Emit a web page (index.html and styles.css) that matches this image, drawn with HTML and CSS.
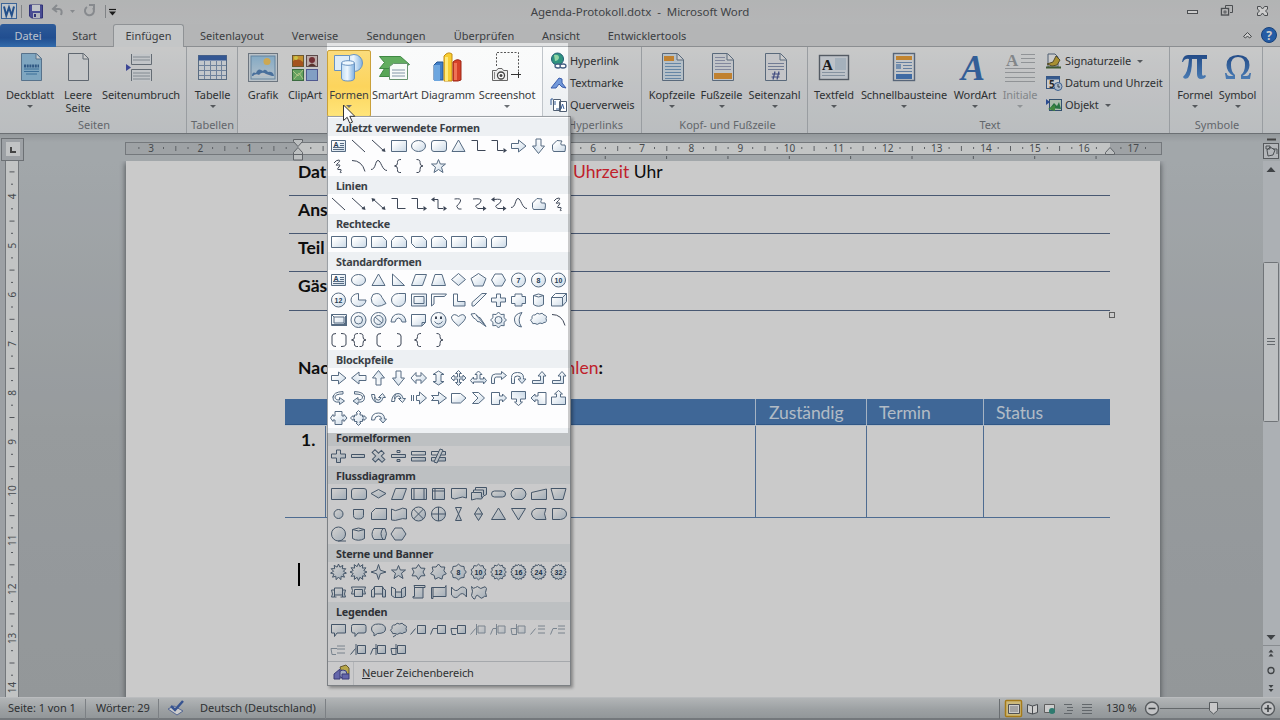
FILE: index.html
```html
<!DOCTYPE html>
<html lang="de">
<head>
<meta charset="utf-8">
<title>Agenda-Protokoll.dotx - Microsoft Word</title>
<link rel="stylesheet" href="styles.css">
</head>
<body>
<svg class="defs" width="0" height="0">
  <defs>
    <linearGradient id="gShape" x1="0" y1="0" x2="1" y2="1"><stop offset="0.2" stop-color="#fff"/><stop offset="1" stop-color="#c9d8e6"/></linearGradient>
    <linearGradient id="gBlue" x1="0" y1="0" x2="1" y2="0"><stop offset="0" stop-color="#bfdcf4"/><stop offset=".45" stop-color="#eef7fe"/><stop offset="1" stop-color="#7fb0e0"/></linearGradient>
    <linearGradient id="gInk" x1="0" y1="0" x2="0" y2="1"><stop offset="0" stop-color="#2c5faa"/><stop offset="1" stop-color="#5c9ae0"/></linearGradient>
    <linearGradient id="gSky" x1="0" y1="0" x2="0" y2="1"><stop offset="0" stop-color="#a5d4f6"/><stop offset="1" stop-color="#e0f1fc"/></linearGradient>
  </defs>
</svg>
<div class="app">
  <header class="titlebar">
    <div class="quick">
      <svg width="120" height="23" viewBox="0 0 120 23">
        <rect x="1.500" y="3.500" width="15" height="15" fill="#eef5fc" stroke="#4a7dbd"/><path d="M4 6.500l2.300 9 2.700-8 2.700 8 2.300-9" fill="none" stroke="#2c65ae" stroke-width="2"/>
        <path d="M21.500 5v13M105.500 5v13" stroke="#a0a4a8"/>
        <path d="M29.500 5h13v13h-11l-2-2z" fill="#5c5fb8" stroke="#3c3f95"/><rect x="32" y="5" width="8" height="6" fill="#f2f5fa"/><rect x="33" y="13" width="7" height="5" fill="#dfe3ee"/><rect x="34" y="14" width="2" height="3" fill="#3c3f95"/>
        <path d="M53 9h6q4 .5 2 6M57 5l-4 4 4 3" fill="none" stroke="#a9adb2" stroke-width="2"/><path d="M70 10h5l-2.500 3z" fill="#a9adb2"/>
        <path d="M87 7a4.500 4.500 0 1 0 6 1M89 5h5v5" fill="none" stroke="#a9adb2" stroke-width="2"/>
        <path d="M109 9.500h7" stroke="#222" stroke-width="1.200"/><path d="M109 11.500h7l-3.500 4z" fill="#222"/>
      </svg>
    </div>
    <div class="title">Agenda-Protokoll.dotx&nbsp; -&nbsp; Microsoft Word</div>
    <div class="wincontrols">
      <svg width="96" height="23" viewBox="0 0 96 23" fill="none" stroke="#5e6266">
        <rect x="3.500" y="10.500" width="10" height="3" fill="#fff"/>
        <path d="M41.500 8V5.500h7v7H46"/><rect x="37.500" y="8.500" width="7" height="6.500" fill="#fff" stroke-width="1.400"/><rect x="40" y="11" width="2" height="2"/>
        <path d="M73.500 6.500h3l2 2.500 2-2.500h3v2.500l-2 2 2 2v2.500h-3l-2-2.500-2 2.500h-3V13l2-2-2-2z" fill="#fff"/>
      </svg>
    </div>
  </header>
  <nav class="tabs">
    <span class="tab file w56">Datei</span><span class="tab w57">Start</span><span class="tab active w71">Einfügen</span><span class="tab w96">Seitenlayout</span><span class="tab w70">Verweise</span><span class="tab w92">Sendungen</span><span class="tab w84">Überprüfen</span><span class="tab w70">Ansicht</span><span class="tab w102">Entwicklertools</span>
    <svg class="help" width="42" height="23" viewBox="0 0 42 23"><path d="M5.500 12.500L9.500 8.500l4 4-2 1.500-2-2-2 2z" fill="#fff" stroke="#55595d"/><circle cx="31" cy="11" r="7.500" fill="#2f74cf" stroke="#1e5299"/><text x="31" y="15.500" class="qm">?</text></svg>
  </nav>
  <section class="ribbon">
    <div class="group g-seiten"><div class="btns">
      <div class="btn w56"><svg viewBox="0 0 32 32"><path d="M7.500 1.500h15l5 5v22h-20z" fill="#9fd0f0" stroke="#6d8fae"/><path d="M22 2v5h5" fill="#fff" stroke="#6d8fae"/><path d="M10 17h15M10 19.500h15M12 22h11" stroke="#4b8abf"/><path d="M10 14h15" stroke="#3c6fa6" stroke-width="3" stroke-dasharray="2 .7"/></svg><b>Deckblatt</b><i></i></div>
      <div class="btn w40"><svg viewBox="0 0 32 32"><path d="M6.500 1.500h15l5 5v22h-20z" fill="#f5f8fb" stroke="#77818c"/><path d="M21 2v5h5" fill="#fff" stroke="#77818c"/></svg><b>Leere<br>Seite</b></div>
      <div class="btn w86"><svg viewBox="0 0 32 32"><path d="M6.500 2v10.500h20V2M6.500 29V17.500h20V29" fill="#f3f7fb" stroke="#7d8792"/><path d="M8 5h17M8 8h17M8 21h17M8 24h17M8 27h17" stroke="#a3acb6"/><path d="M1 12l5 3.500L1 19z" fill="#4b58bb"/></svg><b>Seitenumbruch</b></div>
    </div><em>Seiten</em></div>
    <div class="group g-tabellen"><div class="btns">
      <div class="btn w49"><svg viewBox="0 0 32 32"><rect x="1.500" y="3.500" width="28" height="24" fill="#f4f9fe" stroke="#6f86a2"/><rect x="1.500" y="3.500" width="28" height="5" fill="#416db8"/><path d="M2 13.500h27M2 18.500h27M2 23.500h27M7.500 9v18M13.500 9v18M19.500 9v18M24.500 9v18" stroke="#8ba3c3"/></svg><b>Tabelle</b><i></i></div>
    </div><em>Tabellen</em></div>
    <div class="group g-illus"><div class="btns">
      <div class="btn w40"><svg viewBox="0 0 32 32"><rect x="1.500" y="1.500" width="29" height="28" fill="#e9f3fb" stroke="#87939f"/><rect x="4" y="4" width="24" height="23" fill="url(#gSky)" stroke="#7ea6c8"/><circle cx="20" cy="9.500" r="3.500" fill="#ffd36a"/><path d="M5 24q0-5 4-3 2-6 7-2 2-3 5 1 5-1 6 4z" fill="#5c8cc4"/><path d="M6 24q3-3 6-1 3-4 7-1l6 2z" fill="#e8f1f8"/></svg><b>Grafik</b></div>
      <div class="btn w44"><svg viewBox="0 0 32 32"><rect x="3.500" y="3.500" width="11" height="11" fill="#f7b73c" stroke="#87703e"/><path d="M4 9q5-4 10 1v4H4z" fill="#ce6929"/><circle cx="7" cy="6" r="2" fill="#fff35a"/><rect x="17.500" y="3.500" width="11" height="11" fill="#ead6d2" stroke="#745e5e"/><circle cx="23" cy="8" r="3" fill="#8f3c42"/><path d="M19 14q4-5 8 0z" fill="#704238"/><rect x="3.500" y="17.500" width="11" height="11" fill="#7bc878" stroke="#4a8650"/><path d="M4 19l5 5 5-6M5 27l5-6 4 6" stroke="#d9f5a7" fill="none"/><rect x="17.500" y="17.500" width="11" height="11" fill="#a3c7f5" stroke="#6470b5"/></svg><b>ClipArt</b></div>
      <div class="btn pressed w44"><svg viewBox="0 0 32 32"><circle cx="21" cy="11" r="8.500" fill="url(#gBlue)" stroke="#6893c2"/><path d="M1.500 3.500h15v15h-15z" fill="#ddecf9" stroke="#6893c2"/><path d="M8.500 11v15q0 3 6.500 3t6.500-3V11" fill="url(#gBlue)" stroke="#6893c2"/><ellipse cx="15" cy="11" rx="6.500" ry="2.300" fill="#eef7fe" stroke="#6893c2"/></svg><b>Formen</b><i></i></div>
      <div class="btn w48"><svg viewBox="0 0 32 32"><path d="M.5 4.500h21l9 8-9 4H.5l5-6z" fill="#62ad60" stroke="#3f8944"/><path d="M.5 24.500l5-8h6v8z" fill="#58a657" stroke="#3f8944"/><path d="M10.500 14.500l4-3h14v16h-18z" fill="#f7fbf8" stroke="#67946f"/><path d="M13 18h13M13 21h13M13 24h13" stroke="#8297a7"/></svg><b>SmartArt</b></div>
      <div class="btn w58"><svg viewBox="0 0 32 32"><path d="M2 13l3-3h6v18H2z" fill="#407fc8" stroke="#245692"/><path d="M2 13h6v16H2z" fill="#6da6df"/><path d="M12 4q4-5 8-2v27h-8z" fill="#f8cd31" stroke="#c38d14"/><path d="M13 5h3v24h-3z" fill="#ffea7b"/><path d="M21 10q4-4 8-1v19l-3 1h-5z" fill="#d64128" stroke="#9b2717"/><path d="M22 11h3v17h-3z" fill="#ef7355"/></svg><b>Diagramm</b></div>
      <div class="btn w60"><svg viewBox="0 0 32 32"><path d="M5.500 14V.5h22v20" fill="none" stroke="#555" stroke-dasharray="2 1.500"/><path d="M20 22.500h10M27.500 20v6" stroke="#333"/><path d="M1.500 18.500h4l1.500-2h4l1.500 2h4v10h-15z" fill="#eee" stroke="#656565"/><circle cx="10" cy="23.500" r="3.500" fill="#fff" stroke="#444" stroke-width="1.300"/><circle cx="10" cy="23.500" r="1.500" fill="#444"/><path d="M3.500 20v7" stroke="#888"/></svg><b>Screenshot</b><i></i></div>
    </div></div>
    <div class="group g-links"><div class="rows">
      <div class="row"><svg viewBox="0 0 18 18"><circle cx="7.500" cy="7" r="6" fill="#2f937f" stroke="#1f5d73"/><path d="M4 3q5-1 5 3-1 3-4 3z" fill="#92d6a5"/><ellipse cx="8" cy="14" rx="3" ry="2" fill="#fff" stroke="#455f83" stroke-width="1.300"/><ellipse cx="13" cy="14" rx="3" ry="2" fill="#fff" stroke="#455f83" stroke-width="1.300"/></svg>Hyperlink</div>
      <div class="row"><svg viewBox="0 0 18 18"><path d="M1 14L9 4l3 1v4l4 5-4-1-3-3-3 4z" fill="#7299da" stroke="#3b5dab"/></svg>Textmarke</div>
      <div class="row"><svg viewBox="0 0 18 18"><path d="M3.500 3.500h7v11h-7zM9.500 5.500h7v10h-7z" fill="#fff" stroke="#4f5e72"/><path d="M1 9V3h2M5 5v4M11 13l1.500-5 1.500 5M6 13h3" stroke="#355d98" fill="none"/></svg>Querverweis</div>
    </div><em>Hyperlinks</em></div>
    <div class="group g-kopf"><div class="btns">
      <div class="btn w48"><svg viewBox="0 0 32 32"><path d="M6.500 1.500h15l6 6v21h-21z" fill="#e3f0fa" stroke="#70849a"/><path d="M21 2v6h6" fill="#fff" stroke="#70849a"/><rect x="8" y="4" width="10" height="5" fill="#f0a23c"/><path d="M9 11.500h16M9 14.500h16M9 17.500h16M9 20.500h16M9 23.500h16M9 26.500h16" stroke="#7fa8cf"/></svg><b>Kopfzeile</b><i></i></div>
      <div class="btn w51"><svg viewBox="0 0 32 32"><path d="M6.500 1.500h15l6 6v21h-21z" fill="#f2f5fa" stroke="#70849a"/><path d="M21 2v6h6" fill="#fff" stroke="#70849a"/><rect x="8" y="21" width="18" height="6" fill="#f0a23c"/><path d="M9 5.500h10M9 8.500h10M9 11.500h16M9 14.500h16M9 17.500h16" stroke="#a3aac5"/></svg><b>Fußzeile</b><i></i></div>
      <div class="btn w55"><svg viewBox="0 0 32 32"><path d="M6.500 1.500h15l6 6v21h-21z" fill="#f5f7fb" stroke="#70849a"/><path d="M21 2v6h6" fill="#fff" stroke="#70849a"/><path d="M9 11.500h16M9 14.500h16M9 17.500h16" stroke="#8f9cb9"/><path d="M13 22h8M12.500 25h8M16 19.500l-2 8M20 19.500l-2 8" stroke="#5360a0" stroke-width="1.200"/></svg><b>Seitenzahl</b><i></i></div>
    </div><em>Kopf- und Fußzeile</em></div>
    <div class="group g-text"><div class="btns">
      <div class="btn w46"><svg viewBox="0 0 32 32"><rect x="1.500" y="3.500" width="29" height="24" fill="#edf3fa" stroke="#69727d" stroke-width="1.400"/><rect x="17" y="6" width="11" height="12" fill="#cfdeec"/><text x="4" y="18" class="srf">A</text><path d="M4 20.500h23M4 23.500h23" stroke="#a7b7c9"/></svg><b>Textfeld</b><i></i></div>
      <div class="btn w94"><svg viewBox="0 0 32 32"><rect x="5.500" y="1.500" width="21" height="27" fill="#f4f8fc" stroke="#6d7f96" stroke-width="1.400"/><rect x="8" y="4" width="16" height="4" fill="#f2a63c"/><path d="M8 10.500h16M15 13.500h9M15 16.500h9M8 19.500h16" stroke="#7d9fc9"/><rect x="8" y="12" width="5" height="5" fill="#90b3dd"/><rect x="8" y="22" width="16" height="5" fill="#4f86cd"/></svg><b>Schnellbausteine</b><i></i></div>
      <div class="btn w48"><svg viewBox="0 0 32 32"><text x="14" y="28" class="wa">A</text></svg><b>WordArt</b><i></i></div>
      <div class="btn off w42"><svg viewBox="0 0 32 32"><text x="2" y="14" class="ini">A</text><path d="M17 2.500h14M17 6.500h14M17 10.500h14M1 16.500h30M1 20.500h30M1 25.500h30M1 29.500h30" stroke="#b4b8bc" stroke-width="1.200"/></svg><b>Initiale</b><i></i></div>
      <div class="rows">
        <div class="row"><svg viewBox="0 0 18 18"><path d="M3 2h7l3 3v10H3z" fill="#fff" stroke="#60758e"/><path d="M2 12l6-2 3-6 4 4-3 5-5 1z" fill="#d2b43f" stroke="#6b6033"/><path d="M1 15.500h15" stroke="#51703f" stroke-width="2"/></svg>Signaturzeile<i></i></div>
        <div class="row"><svg viewBox="0 0 18 18"><rect x="1.500" y="2.500" width="13" height="12" fill="#fff" stroke="#46699c"/><path d="M1 4h14" stroke="#4371b2" stroke-width="3"/><text x="4" y="14" class="day">5</text><circle cx="13" cy="12.500" r="4" fill="#d6e7fa" stroke="#4d79b5"/><path d="M13 10v3h2" stroke="#456" fill="none"/></svg>Datum und Uhrzeit</div>
        <div class="row"><svg viewBox="0 0 18 18"><rect x="4.500" y="3.500" width="12" height="11" fill="#d9edd9" stroke="#40648b"/><path d="M5 12l4-5 3 3 2-4 2 7z" fill="#329053"/><path d="M1 3l4 3-4 3z" fill="#365fb5"/><path d="M3 13l7-4v6z" fill="#51ab4b"/></svg>Objekt<i></i></div>
      </div>
    </div><em>Text</em></div>
    <div class="group g-symbole"><div class="btns">
      <div class="btn w46"><svg viewBox="0 0 32 32"><path d="M3 10q1-7 6-7h19v4h-5v15q0 3 3 1l1 1q-1 3-5 3-4 0-4-5V7h-5q0 15-4 19-4 2-5-1 5-4 6-18-4-1-6 3z" fill="url(#gInk)"/></svg><b>Formel</b><i></i></div>
      <div class="btn w39"><svg viewBox="0 0 32 32"><path d="M3 21h1.500q.5 3 3 3h4q-7-4-7-11Q5 3 16 3t11.500 10q0 7-7 11h4q2.500 0 3-3H29l-1 6h-9v-4q4-3 4-10 0-8-7-8t-7 8q0 7 4 10v4H4z" fill="url(#gInk)"/></svg><b>Symbol</b><i></i></div>
    </div><em>Symbole</em></div>
  </section>
  <div class="rulerbar">
    <div class="tabsel"><span></span></div>
    <svg id="hruler" width="1040" height="27" viewBox="125 0 1040 27"></svg>
    <svg class="objsel" width="18" height="27" viewBox="0 0 18 27"><path d="M5 5.500h9" stroke="#555" stroke-width="2"/><rect x="1.500" y="9.500" width="15" height="15" fill="#e0e4e8" stroke="#6d7175"/><path d="M4 12h4v3H4zM8 13l5 3-2 5-5 1-1-6zM11 15h4v5" fill="none" stroke="#5f6468"/></svg>
  </div>
  <main class="work">
    <svg id="vruler" width="19" height="536" viewBox="0 161 19 536"></svg>
    <div class="desk">
      <article class="page">
        <div class="line"><strong>Dat</strong><span class="time"><span class="red">Uhrzeit</span> Uhr</span></div>
        <div class="line"><strong>Ans</strong></div>
        <div class="line"><strong>Teil</strong></div>
        <div class="line last"><strong>Gäs</strong><span class="handle"></span></div>
        <div class="pick"><strong>Nac</strong><span><span class="red">hlen</span><strong>:</strong></span></div>
        <div class="agenda head"><span></span><span></span><span>Zuständig</span><span>Termin</span><span>Status</span></div>
        <div class="agenda body"><strong>1.</strong><span></span><span></span><span></span><span></span></div>
        <div class="caret"></div>
      </article>
    </div>
    <div class="vscroll"><svg width="17" height="536" viewBox="0 0 17 536">
      <path d="M3.500 11h9l-4.500-5z" fill="#505458"/><rect x=".5" y="101.500" width="15" height="159" rx="1" fill="#eceff2" stroke="#8d9297"/><path d="M4 177.500h8M4 180.500h8M4 183.500h8" stroke="#7c8287"/>
      <path d="M3.500 474h9l-4.500 5z" fill="#505458"/><path d="M0 484.500h17" stroke="#aab0b5"/><path d="M5.500 491.500h5l-2.500-3zM5.500 495.500h5l-2.500-3zM5.500 524h5l-2.500 3zM5.500 528h5l-2.500 3z" fill="#505458"/><circle cx="8" cy="509.500" r="3" fill="none" stroke="#505458" stroke-width="1.300"/>
    </svg></div>
  </main>
  <footer class="status">
    <span class="s1">Seite: 1 von 1</span><span class="s2">Wörter: 29</span>
    <span class="s3"><svg width="18" height="16" viewBox="0 0 18 16"><path d="M1 9l6-3 9 5-6 4z" fill="#fff" stroke="#6a81b8"/><path d="M4 6l4 4 8-9" fill="none" stroke="#4468b5" stroke-width="2.500"/></svg></span>
    <span class="s4">Deutsch (Deutschland)</span>
    <svg class="views" width="105" height="22" viewBox="998 0 105 22"><path d="M999.500 1v20" stroke="#858a8e"/><rect x="1005.500" y="2.500" width="16" height="16" rx="1" fill="#ffe89a" stroke="#cf991e" stroke-width="1.500"/><path d="M1008.500 6.500h11v9h-11z" fill="#fff" stroke="#666"/><path d="M1010 9h8M1010 11h8M1010 13h8" stroke="#999"/><path d="M1027.500 6.500l5 1.500 5-1.500v8l-5 1.500-5-1.500zM1032.500 8v8" fill="#fff" stroke="#5a5f64"/><path d="M1044.500 6.500h10v8h-10z" fill="#fff" stroke="#777"/><circle cx="1052" cy="13" r="3" fill="#3a9a8c"/><path d="M1064 6.500h8M1067 9.500h6M1067 12.500h6M1064 15.500h8M1082 6.500h10M1082 9.500h10M1082 12.500h10M1082 15.500h10" stroke="#7b8186"/></svg>
    <span class="pct">130 %</span>
    <svg width="136" height="22" viewBox="1144 0 136 22"><path d="M1160 10.500h100" stroke="#7d8286"/><circle cx="1152" cy="10.500" r="6.500" fill="#f4f6f8" stroke="#6d7276" stroke-width="1.400"/><circle cx="1268" cy="10.500" r="6.500" fill="#f4f6f8" stroke="#6d7276" stroke-width="1.400"/><path d="M1148.500 10.500h7M1264.500 10.500h7M1268 7v7" stroke="#4c5054" stroke-width="1.600"/><path d="M1209.500 4.500h8v8l-4 3.500-4-3.500z" fill="#fafbfc" stroke="#6d7276"/></svg>
  </footer>
  <aside class="gallery">
    <div id="sections"></div>
    <div class="newcanvas"><span class="gut"><svg width="18" height="18" viewBox="0 0 18 18"><path d="M7 3l6-2 3 3v6l-6 1z" fill="#e7d15b" stroke="#80703a"/><circle cx="10" cy="10" r="4" fill="#cfd8f7" stroke="#4a4fa5"/><path d="M1 10l6-5v10H1zM9 10h7v5H9z" fill="#7d80d5" stroke="#4a4a96"/></svg></span><span class="nc"><u>N</u>euer Zeichenbereich</span></div>
  </aside>
  <div class="spotlight"></div>
  <svg class="pointer" width="14" height="21" viewBox="0 0 14 21"><path d="M1.500 1v15.500l3.700-3.200 2.600 6 2.700-1.200-2.700-5.800h5z" fill="#fff" stroke="#333"/></svg>
</div>
<script src="app.js"></script>
</body>
</html>
```
FILE: styles.css
```css
* { box-sizing: border-box; }
body { margin: 0; width: 1280px; height: 720px; overflow: hidden; font: 11px/14px "Noto Sans", "Open Sans", sans-serif; color: #3a3d41; }
.defs { position: absolute; }
.app { position: relative; width: 1280px; height: 720px; overflow: hidden; display: flex; flex-direction: column; }
svg { display: block; flex: none; }
.w39 { width: 39px; } .w40 { width: 40px; } .w42 { width: 42px; } .w44 { width: 44px; } .w46 { width: 46px; }
.w48 { width: 48px; } .w49 { width: 49px; } .w51 { width: 51px; } .w55 { width: 55px; } .w56 { width: 56px; }
.w57 { width: 57px; } .w58 { width: 58px; } .w60 { width: 60px; } .w70 { width: 70px; } .w71 { width: 71px; }
.w84 { width: 84px; } .w86 { width: 86px; } .w92 { width: 92px; } .w94 { width: 94px; } .w96 { width: 96px; } .w102 { width: 102px; }

.titlebar { height: 24px; display: flex; background: linear-gradient(#dfe1e2, #e3e4e5); }
.quick { width: 120px; }
.wincontrols { width: 96px; }
.title { flex: 1; text-align: center; line-height: 23px; font-size: 11.5px; letter-spacing: -.03px; padding-right: 24px; color: #505357; }
.tabs { height: 23px; display: flex; background: #e2e3e4; box-shadow: inset 0 -1px #aeb2b6; }
.tab { text-align: center; line-height: 23px; color: #4b4e52; }
.tab.file { background: linear-gradient(#3972bf, #2a62b5 60%, #3f86d6); color: #e9f2ff; border-radius: 3px 3px 0 0; }
.tab.active { background: #f6f8f9; border: 1px solid #b3b7bb; border-bottom: 0; border-radius: 3px 3px 0 0; line-height: 22px; }
.help { margin-left: auto; }
.qm { font: bold 12px "Noto Sans", sans-serif; fill: #fff; text-anchor: middle; }

.ribbon { height: 87px; display: flex; background: linear-gradient(#fafbfb, #f1f3f5 45%, #e9edf0); border-bottom: 1px solid #878c91; }
.group { display: flex; flex-direction: column; border-right: 1px solid #c0c5ca; height: 86px; white-space: nowrap; }
.btns { display: flex; padding-top: 3px; height: 71px; }
.group em { font-style: normal; text-align: center; color: #7b8086; line-height: 14px; }
.g-seiten { width: 187px; padding-left: 2px; }
.g-seiten .btn { position: relative; }
.g-tabellen { width: 51px; padding-left: 1px; }
.g-illus { width: 305px; padding-left: 5px; background: linear-gradient(#fafbfb, #f6f7f9); }
.g-links { width: 99px; padding-left: 7px; }
.g-kopf { width: 166px; padding-left: 6px; }
.g-text { width: 362px; padding-left: 3px; }
.g-symbole { width: 93px; padding-left: 2px; }
.btn { height: 67px; display: flex; flex-direction: column; align-items: center; padding-top: 2px; letter-spacing: -.1px; }
.btn svg { width: 32px; height: 32px; overflow: visible; }
.btn b { font-weight: normal; text-align: center; line-height: 13px; margin-top: 4px; }
.btn i, .row i { border: 3px solid transparent; border-top-color: #6b6f74; border-bottom: 0; margin-top: 4px; width: 6px; height: 3px; }
.btn.off b { color: #a4a8ac; }
.btn.off i { border-top-color: #b5b9bd; }
.pressed { border: 1px solid #c9a03a; border-radius: 2px; padding-top: 1px; background: linear-gradient(#fbdc7c, #fcd45c 55%, #ffe57a); }
.rows { display: flex; flex-direction: column; padding-top: 3px; height: 71px; }
.btns .rows { padding: 0 0 0 4px; }
.row { display: flex; align-items: center; height: 22px; gap: 2px; letter-spacing: -.08px; }
.row svg { width: 18px; height: 18px; }
.row i { margin: 0 0 0 4px; }
.srf { font: bold 15px "Liberation Serif", serif; fill: #222; }
.wa { font: italic bold 36px "Liberation Serif", serif; fill: #3f76bd; text-anchor: middle; }
.ini { font: bold 17px "Liberation Serif", serif; fill: #a4a8ac; }
.day { font: bold 10px "Noto Sans", sans-serif; fill: #333; }

.rulerbar { height: 27px; display: flex; background: linear-gradient(#b9bfc3, #cbd1d5 30%); }
.tabsel { width: 125px; padding: 4px 0 0 1px; }
.tabsel span { display: block; width: 23px; height: 23px; border: 1px solid #888d92; background: linear-gradient(#555, #555) 8px 8px/2px 6px no-repeat, linear-gradient(#555, #555) 8px 12px/6px 2px no-repeat, linear-gradient(#f2f4f6, #f2f4f6) 4px 3px/14px 14px no-repeat, #c5cacf; }
.objsel { margin-left: auto; }
.num { font: 10px "Noto Sans", sans-serif; fill: #585d62; text-anchor: middle; }

.work { height: 536px; display: flex; }
.desk { width: 1244px; padding-left: 107px; background: linear-gradient(#cbd1d5, #bdc2c5 50%, #b8bdc0); }
.page { width: 1034px; height: 536px; background: #fdfdfd; box-shadow: 0 3px 5px 1px #6f7478; clip-path: inset(0 -7px 0 -7px); padding-left: 159px; font: 17.500px/22px Lato, "Open Sans", sans-serif; color: #111; }
.vscroll { width: 17px; background: #d8dde1; }
.line { height: 38px; margin-left: 4px; width: 821px; padding-left: 9px; border-bottom: 1px solid #5b6e8f; display: flex; position: relative; }
.line:first-child { height: 35px; }
.line.last { height: 39px; }
.line + .line { padding-top: 3px; }
.line strong { width: 275px; }
.red { color: #f02936; }
.handle { position: absolute; left: 820px; top: 40px; width: 6px; height: 6px; border: 1px solid #777; }
.pick { display: flex; justify-content: space-between; width: 305px; margin: 46px 0 0 13px; height: 42px; }
.agenda { display: grid; grid-template-columns: 41px 430px 111px 117px 126px; width: 825px; }
.head { height: 26px; background: #4f81bd; color: #dfeaf7; line-height: 27px; border-bottom: 1px solid #3d6da8; letter-spacing: -.1px; }
.head span { padding-left: 13px; border-right: 1px solid #cfe0f4; }
.head span:nth-child(4), .head span:nth-child(5) { padding-left: 12px; }
.head span:last-child, .body span:last-child, .head span:first-child { border-right: 0; }
.body { height: 93px; border-bottom: 1px solid #6287b6; border-top: 1px solid #e8f2fc; }
.body > * { border-right: 1px solid #6287b6; }
.body strong { padding: 3px 0 0 16px; }
.caret { width: 2px; height: 23px; background: #000; margin: 45px 0 0 13px; }

.status { height: 23px; display: flex; align-items: center; background: linear-gradient(#dfe3e5, #c5cacd 50%, #b4babd); border-top: 1px solid #e9ecee; box-shadow: inset 0 -2px #92979b; white-space: nowrap; }
.status > span { height: 20px; line-height: 18px; padding-bottom: 2px; border-right: 1px solid #9ba1a6; letter-spacing: -.05px; }
.status .s1 { width: 86px; padding-left: 8px; }
.s2 { width: 73px; padding-left: 10px; }
.status .s3 { width: 33px; padding: 1px 0 0 8px; }
.status .s3, .status .pct { border: 0; }
.s4 { width: 134px; padding-left: 8px; }
.views { margin-left: auto; }
.pct { width: 41px; padding-left: 3px; }

.gallery { position: absolute; left: 327px; top: 116px; width: 244px; height: 570px; border: 1px solid #9ba0a5; padding-top: 1px; background: #fdfdfe; box-shadow: 2px 2px 3px #0005; }
.gh { height: 18px; background: #edf0f3; font-weight: bold; font-size: 10.800px; letter-spacing: -.22px; line-height: 20px; padding-left: 8px; color: #3a3f46; }
.cells { display: grid; grid-template-columns: repeat(12, 20px); grid-auto-rows: 20px; padding-left: 1px; }
.cells svg { fill: url(#gShape); stroke: #566b82; stroke-width: 1; }
.cells .ln { fill: none; stroke: #3d4656; }
.cells .no { fill: none; }
.cells .dk { fill: #3d4656; stroke: none; }
.cells text { font: bold 7px "Liberation Sans", sans-serif; fill: #263d55; stroke: none; text-anchor: middle; }
.newcanvas { display: flex; height: 24px; border-top: 1px solid #cfd3d7; margin-top: 1px; }
.gut { width: 26px; padding: 2px 0 0 5px; border-right: 1px solid #e0e3e6; }
.nc { padding-left: 8px; line-height: 21px; letter-spacing: -.1px; }
.spotlight { position: absolute; left: 327px; top: 43px; width: 241px; height: 390px; box-shadow: 0 0 0 1400px rgba(0, 0, 0, .2); }
.pointer { position: absolute; left: 342px; top: 104px; }
```
FILE: app.js
```js
// Builders for gallery glyphs on a 20x20 cell
const F = (d, no = '', t = '') => `<path d="${d}"/>` + (no ? `<path class="no" d="${no}"/>` : '') + (t ? `<text x="9.500" y="12.600">${t}</text>` : '');
const L = (d, dk = '') => `<path class="ln" d="${d}"/>` + (dk ? `<path class="dk" d="${dk}"/>` : '');
const T = (s, tr) => `<g transform="${tr}">${s}</g>`;
const ring = (n, fn) => 'M' + Array.from({ length: n }, (_, i) => {
  const a = -Math.PI / 2 + i * 2 * Math.PI / n, r = fn(i);
  return (9.5 + r * Math.cos(a)).toFixed(1) + ' ' + (10 + r * Math.sin(a)).toFixed(1);
}).join('L') + 'z';
const star = (n, R, r) => ring(n * 2, i => i % 2 ? r : R);
const FX = 'translate(19.500 0) scale(-1 1)', FY = 'translate(0 20) scale(1 -1)';
const R90 = 'rotate(90 9.500 10)', R270 = 'rotate(-90 9.500 10)';
const circ = (r, x = 9.5, y = 10) => `M${x - r} ${y}a${r} ${r} 0 1 0 ${2 * r} 0a${r} ${r} 0 1 0 ${-2 * r} 0z`;

const rect = F('M2.500 4.500h15v11h-15z');
const round = F('M5 4.500h10q2.500 0 2.500 2.500v6q0 2.500-2.500 2.500H5q-2.500 0-2.500-2.500V7q0-2.500 2.500-2.500z');
const oval = F('M2.500 10a7 5.500 0 1 0 14 0a7 5.500 0 1 0-14 0z');
const tri = F('M9.500 4l6.500 11.500h-13z');
const textbox = F('M2.500 4.500h14v11h-14z', 'M11 7.500h4M11 9.500h4M4 11.500h11M4 13.500h11') + '<text x="7" y="10.500">A</text>';
const line = L('M3 4l13 12'), lineA = L('M3 4l12 11', 'M16.500 16l-4-1 3-3z'), lineAA = L('M4 5l11 10', 'M16.500 16l-4-1 3-3zM2.500 4l4 1-3 3z');
const elb = L('M2.500 4.500h6v10h8');
const elbA = L('M2.500 4.500h6v10h6', 'M18 14.500l-3.500-2.500v5z');
const elbAA = L('M5 5.500h4v9h5', 'M18 14.500l-3.500-2.500v5zM2 5.500L5.500 3v5z');
const cur = L('M5.500 5q7-1 6 2t-3 4 1 4h3');
const curA = L('M4 5q9-1 8 2t-4 4 1 3.500h5', 'M17.500 14.500l-3.500-2.500v5z');
const curAA = L('M5 5.500q8-1 7 1.500t-4 4 1 3.500h5', 'M17.500 14.500l-3.500-2.500v5zM2 5.500L5.500 3v5z');
const wave = L('M2 13.500C7 13.500 6 4.500 9 4.500S13 14.500 18 14.500');
const free = F('M3.500 9l4.500-4.500 5 .5q-2.500 4 0 4h3q1 1 0 6.500H4.500l-1-2z');
const scrib = L('M5 7q2-3 5-3 2 .5-2 4-2 2 1 1 3-1 1 2-3 3 0 2.500t2 1.500q-2 2 .500 1.500');
const arR = F('M2.500 7.500h7v-3.500l7.500 6-7.500 6v-3.500h-7z');
const arc = L('M3 4.500q10 0 13 11'), lb = L('M12 3.500q-4 0-3.500 3t-3 3.500q3.500 0 3 3.500t3.500 3');
const rb = T(lb, FX);
const five = F('M9.500 3.500l1.800 4.500h5.200l-4 3.200 1.500 5.300-4.500-3-4.500 3L6.500 11.200l-4-3.200h5.200z');
const plus = F('M7.500 4h4v4h5v4h-5v4.500h-4V12h-5V8h5z');
const up = T(arR, R270), dbl = F('M2 10l5-5.500V8h5V4.500l5.500 5.500-5.500 5.500V12H7v3.500z');
const dblV = F('M9.500 3l5.500 3.500h-3v7h3l-5.500 3.500L4 13.500h3v-7H4z');
const quad = F('M9.500 2.500l3 3h-2v3.500h3.500V7l3 3-3 3v-2h-3.500v3.500h2l-3 3-3-3h2V11H5v2l-3-3 3-3v2h3.500V5.500h-2z');
const uturn = F('M2.500 15.500V9.500q0-5 6-5t6 5v1.500h2.500l-4 4.500-4-4.500h2.500q.5-3-3-3t-3 2.500v5z');
const round3 = F('M2.500 12q0-7 7-7 6 0 6 6h2l-3.500 4-3.500-4h2q0-3-3-3-3.500 0-4 4z');
const bent = F('M2.500 15.500V10q0-4 4-4h6V3.500l5 4-5 4V9h-5q-2 0-2 2v4.500z');
const bentUp = F('M3.500 15.500v-3h8V8h-2.500l4-4.500 4 4.500H14.500v7.500z');
const curl = F('M14 3.500Q4 4 4 9.500t6.500 4.500v2.500l5-3.500-5-3.500v2.500Q6 12 6 9t8-3z', 'M4 9.500q0-1 1-2');
const curlH = F('M2.500 6.500q1 8 6.500 8 4 0 5-5h2.500l-3-4-4 4H12q-1 2.500-2.500 2.500Q6 12 5.500 6.500z', 'M6.500 14q-1-3-1-5');
const callR = F('M2.500 4.500h8V8h3V6l4 4-4 4v-2h-3v4.500h-8z');
const callU = F('M2.500 16.500V9h5V6H5.500l4-3.500 4 3.500h-2v3h5v7.500z');
const bub = F('M2.500 4.500h14v8.500H8l-2.500 3.500V13h-3z');
const cloud = 'M6 13.500q-3 1-3-1.500-3-2 0-3.500Q2.500 4.500 6 5q2-3 4.500-1 3-2 4.500 1 3.500.5 2 3.500 1.500 4-2 4-1.500 2-4 .5-3 2.500-5 .5z';
const num = n => F(star(n > 12 ? 16 : n, 7.800, 6.400), '', n);
const oct = n => F(circ(7), '', n);
const co = (k, a) => F(k == 'n' ? 'M9 6h7v7H9z' : 'M8.500 5.500h8v8h-8z', a);
const soft = s => `<g opacity=".6">${s}</g>`;
const c1 = 'M1.500 14.500l5-6', c2 = 'M1.500 14.500l2.500-6h4', c3 = 'M7 14.500H3l-1-6h6';

const sections = [
  ['Zuletzt verwendete Formen', [textbox, line, lineA, rect, oval, round, tri, elb, elbA, arR, T(arR, R90), free, scrib, arc, wave, lb, rb, five]],
  ['Linien', [line, lineA, lineAA, elb, elbA, elbAA, cur, curA, curAA, wave, free, scrib]],
  ['Rechtecke', [rect, round, F('M2.500 4.500h11l4 4v7h-15z'), F('M6 4.500h8l3.500 4v7h-15v-7z'), F('M2.500 4.500h11l4 4v7h-11l-4-4z'), F('M2.500 7l2.500-2.500h8.500l4 4v7h-15z'), rect, F('M2.500 6.500l2-2h11l2 2v9h-15z'), F('M5 4.500h12.500V13q-.5 2.500-2.500 2.500H2.500V7z')]],
  ['Standardformen', [textbox, oval, tri, F('M3.500 4v11.500h12z'), F('M6.500 4.500h11l-4 11h-11z'), F('M6 4.500h7l3.500 11h-14z'), F('M9.500 3.500l7 6-7 6-7-6z'), F('M9.500 3.500l7.500 5-3 7.500H5L2 8.500z'), F('M6 4h7l3.500 6-3.500 6H6l-3.500-6z'), oct(7), oct(8), oct(10),
    oct(12), F('M9.500 3.500v6.500h7.500a7.500 6.500 0 1 1-7.500-6.500z'), F('M4 4.500q7-3 9 3l4 6q-10 6-14-1-2-4 1-8z'), F('M16.500 3.500v6.500a7 6.500 0 1 1-7-6.500z'), F('M2.500 4h15v12h-15z', 'M5 6.500h10v7H5z'), F('M2.500 16V4h15l-2 2.500H5V14z'), F('M4.500 4h4v7.500h7.500V16H4.500z'), F('M3 15.500v-3L13 3.500h4.500L5 16H3z'), plus, F('M6 4h7v2.500h3.500v7H13V16H6v-2.500H2.500v-7H6z'), F('M4.500 5.500v9q5 3.500 10 0v-9q-5-3-10 0z', 'M4.500 5.500q5 3 10 0'), F('M2.500 7.500l4-4h11v8l-4 4.500h-11z', 'M2.500 7.500h11V16M13.500 7.500l4-4'),
    F('M2.500 4.500h15v11h-15z', 'M5 7h10v6H5zM2.500 4.500L5 7M15 13l2.500 2.500') + '<path class="no" stroke-width="2" d="M3 15h14V6"/>', F(circ(7.500), circ(4)), F(circ(7.500), circ(4.500) + 'M6 7l7 6'), F('M2 12q1-8 7.500-8T17 12h-4q-1-4-3.500-4T6 12z'), F('M2.500 4.500h14v8l-3.500 3.500H2.500z', 'M13 16v-3.500h3.500'), F(circ(7.500), 'M5.500 11.500q4 5 8 0') + '<path class="dk" d="M6 6.500h2v2.500H6zM11 6.500h2v2.500h-2z"/>', F('M9.500 16Q2 10 2.500 7q2-4.500 7-.5 5-4 7 .5.500 3-7 9z'), F('M2 4l4-.5 4 4h1l6 9-7-5-1 .5-3-3.500H5z', 'M7 5l8 9'), F(star(8, 8, 6), circ(3.500)), F('M13 2.500Q5 4 5.500 10t7 7q-5-7 .5-14.500z'), F(cloud), arc,
    L('M7 3.500Q3 3.500 3 6v8q0 2.500 4 2.500M12 3.500q5 0 5 2.500v8q0 2.500-5 2.500'), T(lb, 'translate(-3 0)') + T(rb, 'translate(3 0)'), L('M12 3.500Q8 3.500 8 6v8q0 2.500 4 2.500'), L('M8 3.500q4 0 4 2.500v8q0 2.500-4 2.500'), lb, rb]],
  ['Blockpfeile', [arR, T(arR, FX), up, T(arR, R90), dbl, dblV, quad, F('M9.500 3l3.500 3.500h-2V11h3.500V9l3 3.500-3 3.500v-2h-10v2l-3-3.500 3-3.500v2H8V6.500H6z'), bent, uturn, bentUp, bentUp,
    curl, T(curl, FX), curlH, T(curlH, FY), F('M7.500 7.500h3V4l7 6-7 6v-3.500h-3z', 'M2.500 7v6M4.500 7v6'), F('M2.500 7.500h7V4l8 6-8 6v-3.500h-7l2.500-2.500z'), F('M2.500 5.500h9l5.500 4.500-5.500 5h-9z'), F('M3.500 4.500h6l6 5.500-6 5.500h-6l5.500-5.500z'), callR, T(callU, FY), T(callR, FX), callU,
    F('M6 3.500h7V8h2V6.500l3 3.500-3 3.500V12h-2v4.500H6V12H4v1.500L1.500 10 4 6.500V8h2z'), F('M9.500 2.500l2.500 2.500h-1v2h2.500v2H15V7.500l2.500 2.500-2.500 2.500V11h-1.500v2.500H11v1.500h1l-2.500 2.500L7 15h1v-1.500H5.500V11H4v1.500L1.500 10 4 7.500V9h1.500V7H8V5H7z'), round3]],
  ['Formelformen', [plus, F('M2.500 8.500h13v3h-13z'), T(plus, 'rotate(45 9.500 10)'), F('M2.500 8.500h14v3h-14zM8 4.500h3v2H8zM8 13.500h3v2H8z'), F('M2.500 5.500h14v3.500h-14zM2.500 11.500h14V15h-14z'), F('M2.500 5.500h14v3.500h-14zM2.500 11.500h14V15h-14z') + F('M11 3l3 1-6 13-3-1z')]],
  ['Flussdiagramm', [rect, round, F('M9.500 5.500l7.500 4-7.500 4.500-7.500-4.500z'), F('M6.500 4.500h11l-4 11h-11z'), F('M2.500 4.500h15v11h-15z', 'M5 4.500v11M15 4.500v11'), F('M3.500 4.500h12v11h-12z', 'M6 4.500v11M3.500 7h12'), F('M2.500 4.500h15V14q-4-2-8 0t-7 0z'), F('M6.500 3.500h11v7l-3 1.500-2 3q-5-1-10 1V8.500h2V6h2z', 'M4.500 8.500h8v5M6.500 6h8v5'), F('M5.500 7h8q3 0 3 3t-3 3h-8q-3 0-3-3t3-3z'), F('M6 4.500h7q4 2 4 5.500t-4 5.500H6Q2 13.500 2 10t4-5.500z'), F('M2.500 8.500L17.500 5v10.500h-15z'), F('M2 4.500h15l-3 11H5z'),
    F(circ(4.500)), F('M4.500 5.500h10v6q0 3.500-5 3.500t-5-3.500z'), F('M6.500 4.500h11v11h-15v-7z'), F('M2.500 5q4 3 7.500.5t7.500-.5v10q-4-1-7.500.5T2.500 16z'), F(circ(7), 'M4.500 5l10 10M14.500 5l-10 10'), F(circ(7), 'M9.500 3v14M2.500 10h14'), F('M6.500 3.500h6l-6 13h6z'), F('M9.500 3.500L13.500 10l-4 6.500-4-6.500z', 'M5.500 10h8'), F('M9.500 4l7 11.500h-14z'), F('M2.500 4.500h14l-7 11.500z'), F('M7 4.500h10q-3 5 0 11H7q-4-2-4.500-5.500T7 4.500z'), F('M3.500 4.500h8q6 1 6 5.500t-6 5.500h-8z'),
    F(circ(7), 'M9 17h8'), F('M3.500 5.500v9q6 3.500 12 0v-9q-6-3-12 0z', 'M3.500 5.500q6 3 12 0'), F('M5 4.500h11q3 5 0 11H5q-4-5 0-11z', 'M14 4.500q-4 5 0 11'), F('M6 4h7l4 6-4 6H6l-4-6z')]],
  ['Sterne und Banner', [F(star(11, 8, 5)), F(star(12, 8.500, 5.500)), F(star(4, 7.500, 2.500)), five, F(star(6, 7.500, 4.500)), F(star(7, 8, 5.500)), num(8), num(10), num(12), num(16), num(24), num(32),
    F('M5.500 6h8v7h-8zM2.500 8h3v7h-3l1-3zM13.500 8h3l-1 4 1 3h-3z', 'M5.500 13v2h2M13.500 13v2h-2'), F('M2.500 5h14l-1 3.500 1 3.500h-14l1-3.500z') + F('M5.500 7.500h8v7h-8z'), F('M2.500 8q2 0 3-3.500h8q1 3.500 3 3.500v7h-3v-3h-8v3h-3z', 'M5.500 5v7M13.500 5v7'), F('M2.500 5l4 2v3h6V7l4-2v9l-3 1.500h-8l-3-2z', 'M6.500 10v5M12.500 10v5'), F('M5 3.500h11v2h-2V16H4v-1.500h1.500V5z', 'M6 5.500h8'), F('M3 5.500h13l1-2v11H4v2H2.500v-11z', 'M4 14.500v-9'), F('M2.500 5q4 6 7.500 2t7.500 0v8q-4-6-7.500-1.500T2.500 13z'), F('M2.500 4.500q2 3 4 1t3.500 0 4 0 3.500 1q-2 4 0 8-2-1-3.500 1t-4-1-3.500 1-4-2q2-4 0-9z')]],
  ['Legenden', [bub, F('M4 4.500h11q2 0 2 2V11q0 2-2 2H9l-3 3.500V13H4q-1.500 0-1.500-2V6.500q0-2 1.500-2z'), F('M5 13Q2.500 12 2.500 9q0-5 7-5t7 5q0 4.500-8 4.500L5 16z'), F(cloud, 'M7 15l-3 2'), co('b', c1), co('b', c2), co('b', c3), soft(co('n', c1 + 'M7.500 4v11')), soft(co('n', c2 + 'M7.500 4v11')), soft(co('n', c3 + 'M7.500 4v11')), soft(F('M9 6h7M9 9h7M9 13h7', c1)), soft(F('M9 6h7M9 9h7M9 13h7', c2)),
    soft(F('M8 6h8M8 9h8M8 13h8', c3)), co('b', c1 + 'M7 4v11'), co('b', c2 + 'M7 4v11'), co('b', c3 + 'M7 4v11')]]
];
document.getElementById('sections').innerHTML = sections.map(([h, c]) =>
  `<div class="gh">${h}</div><div class="cells">` + c.map(s => `<svg width="20" height="20">${s}</svg>`).join('') + '</div>').join('');

// Rulers: one centimetre is 49.1 px at this zoom level
const cm = 49.1;
let h = '<rect x="125.500" y="8.500" width="1036" height="12" fill="#c6cbcf" stroke="#92979b"/><rect x="298" y="9" width="812" height="11" fill="#f3f5f6"/>';
for (let q = -13; q <= 69; q++) {
  const x = 298.5 + q * cm / 4;
  if (q === 0 || q === 66) continue;
  if (q % 4 === 0) h += `<text class="num" x="${x}" y="18">${Math.abs(q / 4)}</text>`;
  else h += `<path d="M${x.toFixed(1)} ${q % 2 ? 13 : 12}v${q % 2 ? 2 : 5}" stroke="#74797e"/>`;
}
for (let x = 298.5 + 61.35 * 5; x < 1100; x += 61.35) h += `<path d="M${x} 22v3" stroke="#6c7176"/>`;
h += '<path d="M293.500 5.500h9v2l-4.500 5-4.500-5zM293.500 26v-7.500l4.500-5 4.500 5V26zM293.500 20.500h9M1105.500 20.500v-2l4.500-5 4.500 5v2z" fill="#eceff1" stroke="#787d82"/>';
document.getElementById('hruler').innerHTML = h;

let v = '<rect x="0" y="161" width="19" height="536" fill="#c3c9cd"/><rect x="5.500" y="160.500" width="13" height="538" fill="#f3f5f6" stroke="#92979b"/>';
for (let q = 14; q <= 56; q++) {
  const y = 196.5 + (q - 16) * cm / 4;
  if (y < 163) continue;
  if (q % 4 === 0) v += `<text class="num" transform="translate(15.500 ${y}) rotate(-90)">${q / 4}</text>`;
  else v += `<path d="M${q % 2 ? 11 : 9.500} ${y.toFixed(1)}h${q % 2 ? 2 : 5}" stroke="#686d72"/>`;
}
document.getElementById('vruler').innerHTML = v;
```
